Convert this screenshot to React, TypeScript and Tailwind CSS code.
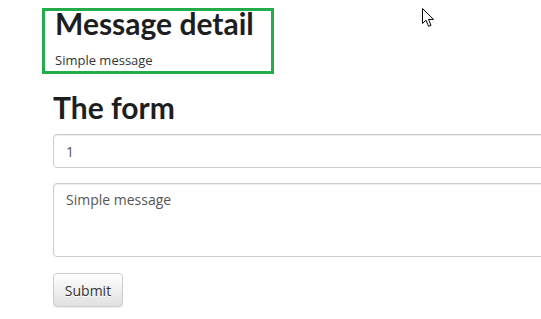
export default function App() {
  return (
    <div
      className="relative w-full h-[319px] overflow-hidden bg-white pl-[53px] pt-[8px] text-[#333]"
      style={{ fontFamily: '"Open Sans", "Noto Sans", sans-serif' }}
    >
      {/* message detail panel */}
      <div className="ml-[-11px] w-[232px] border-[3px] border-[#22ad4a] pl-[10px] pb-[2px]">
        <h1 className="font-['Lato',sans-serif] text-[30px] leading-[25px] font-bold text-[#1e1e1e]">Message detail</h1>
        <p className="mt-[15px] text-[13px] leading-[18px] text-[#333]">Simple message</p>
      </div>

      <h2 className="mt-[17px] font-['Lato',sans-serif] text-[30px] leading-[33px] font-bold text-[#1e1e1e]">The form</h2>

      <form className="mt-[10px] flex flex-col items-start" onSubmit={(e) => e.preventDefault()}>
        <input
          defaultValue="1"
          className="block w-[560px] h-[34px] rounded-[4px] border border-[#ccc] px-3 text-[14px] text-[#555] shadow-[inset_0_1px_1px_rgba(0,0,0,0.075)] outline-none"
        />
        <textarea
          defaultValue="Simple message"
          className="mt-[15px] block w-[560px] h-[74px] resize-none rounded-[4px] border border-[#ccc] px-3 py-[6px] text-[14px] leading-[20px] text-[#555] shadow-[inset_0_1px_1px_rgba(0,0,0,0.075)] outline-none"
        />
        <button
          type="submit"
          className="mt-[16px] h-[34px] w-[70px] rounded-[4px] border border-[#ccc] bg-gradient-to-b from-white to-[#e0e0e0] text-[14px] text-[#333] shadow-[0_1px_1px_rgba(0,0,0,0.075)] [text-shadow:0_1px_0_#fff]"
        >
          Submit
        </button>
      </form>

      {/* mouse pointer */}
      <svg className="absolute left-[422px] top-[8px]" width="13" height="20" viewBox="0 0 13 20">
        <path
          d="M0.5 0.5 L0.5 15.5 L4 12.2 L6.6 18.3 L9 17.3 L6.5 11.4 L11.5 11.4 Z"
          fill="#fff"
          stroke="#000"
          strokeWidth="1"
          strokeLinejoin="round"
        />
      </svg>
    </div>
  )
}
